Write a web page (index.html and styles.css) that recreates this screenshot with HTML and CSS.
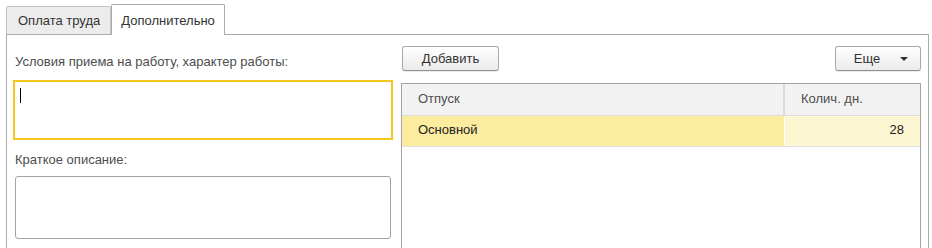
FILE: index.html
```html
<!DOCTYPE html>
<html lang="ru">
<head>
    <meta charset="UTF-8">
    <title>Дополнительно</title>
    <link rel="stylesheet" href="styles.css">
</head>
<body>
    <div class="tabs">
        <div class="tab">Оплата труда</div>
        <div class="tab tab-active">Дополнительно</div>
    </div>

    <div class="panel">
        <div class="left-col">
            <div class="field-label first">Условия приема на работу, характер работы:</div>
            <div class="input input-focus"><span class="caret"></span></div>

            <div class="field-label">Краткое описание:</div>
            <div class="input input-plain"></div>
        </div>

        <div class="right-col">
            <div class="toolbar">
                <button class="btn btn-add">Добавить</button>
                <button class="btn btn-more">Еще <span class="arrow"></span></button>
            </div>

            <div class="grid">
                <div class="grid-row grid-head">
                    <div class="cell cell-name">Отпуск</div>
                    <div class="cell cell-days">Колич. дн.</div>
                </div>
                <div class="grid-row grid-current">
                    <div class="cell cell-name">Основной</div>
                    <div class="cell cell-days num">28</div>
                </div>
            </div>
        </div>
    </div>
</body>
</html>
```

FILE: styles.css
```css
body {
    font-family: 'Liberation Sans', Arial, sans-serif;
    font-size: 13px;
    color: #4d4d4d;
    margin: 0;
    padding: 0;
    background-color: #fff;
    height: 248px;
    overflow: hidden;
}
.tabs {
    display: flex;
    align-items: flex-end;
    padding: 4px 0 0 6px;
    height: 30px;
}
.tab {
    box-sizing: border-box;
    height: 28px;
    padding: 0 10px 0 11px;
    line-height: 27px;
    background-color: #ececec;
    border: 1px solid #c3c3c3;
    border-bottom: none;
    border-radius: 2px 2px 0 0;
    color: #333;
}
.tab-active {
    height: 31px;
    padding: 0 9px;
    line-height: 31px;
    background-color: #fff;
    border-color: #ababab;
    position: relative;
    top: 1px;
    z-index: 1;
}
.panel {
    display: flex;
    gap: 8px;
    margin: 0 3px 0 6px;
    padding: 11px 7px 0 6px;
    border: 1px solid #ababab;
    border-bottom: none;
    height: 214px;
}
.left-col {
    width: 380px;
    flex-shrink: 0;
}
.field-label {
    height: 16px;
    line-height: 16px;
    margin: 12px 0 8px 2px;
}
.field-label.first {
    margin-top: 8px;
    margin-bottom: 10px;
}
.input {
    box-sizing: border-box;
    background-color: #fff;
}
.input-focus {
    height: 60px;
    border: 2px solid #f7c520;
    padding: 6px 5px;
}
.caret {
    display: block;
    width: 1px;
    height: 15px;
    background-color: #000;
}
.input-plain {
    height: 63px;
    width: 376px;
    margin-left: 2px;
    border: 1px solid #a3a3a3;
    border-radius: 3px;
}
.right-col {
    flex: 1;
}
.toolbar {
    display: flex;
    justify-content: space-between;
    margin-left: 1px;
}
.btn {
    box-sizing: border-box;
    height: 25px;
    font-family: inherit;
    font-size: 13px;
    color: #333;
    background: linear-gradient(#ffffff, #ebebeb);
    border: 1px solid #a9a9a9;
    border-bottom-color: #8f8f8f;
    border-radius: 3px;
    box-shadow: 0 1px 1px rgba(0, 0, 0, 0.08);
    padding: 0;
}
.btn-add {
    width: 97px;
}
.btn-more {
    width: 86px;
    padding-left: 6px;
    display: flex;
    align-items: center;
    justify-content: center;
    gap: 20px;
}
.arrow {
    width: 0;
    height: 0;
    border-left: 4px solid transparent;
    border-right: 4px solid transparent;
    border-top: 4px solid #333;
}
.grid {
    margin-top: 12px;
    border: 1px solid #a3a3a3;
    border-bottom: none;
    height: 170px;
}
.grid-row {
    display: flex;
}
.cell {
    box-sizing: border-box;
    padding: 0 16px;
}
.cell-name {
    width: 383px;
}
.cell-days {
    flex: 1;
}
.num {
    text-align: right;
    padding-right: 16px;
}
.grid-head {
    background-color: #f2f2f2;
    height: 31px;
    line-height: 30px;
    border-bottom: 1px solid #dcdcdc;
}
.grid-head .cell-name {
    border-right: 2px solid #dadada;
}
.grid-current {
    height: 30px;
    line-height: 28px;
    color: #222;
    border-bottom: 1px solid #e0e0e0;
}
.grid-current .cell-name {
    background-color: #fbec9f;
    border-right: 1px solid #fff;
}
.grid-current .cell-days {
    background-color: #fdf6d3;
}
```
